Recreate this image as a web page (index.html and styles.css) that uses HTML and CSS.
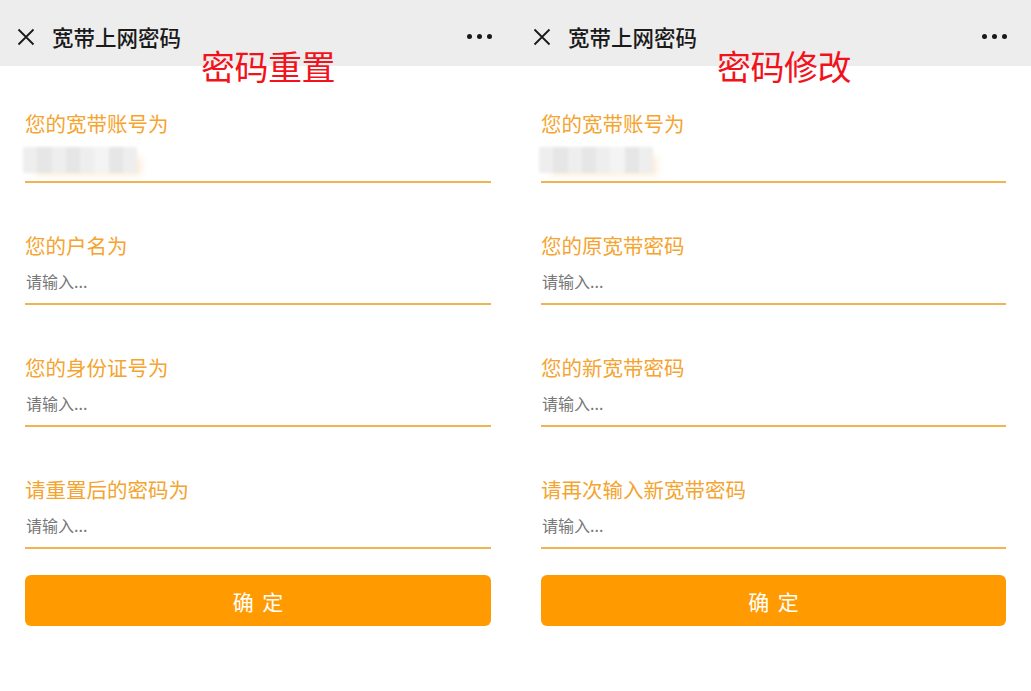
FILE: index.html
```html
<!DOCTYPE html>
<html lang="zh-CN">
<head>
<meta charset="utf-8">
<title>宽带上网密码</title>
<link rel="stylesheet" href="styles.css">
</head>
<body>
<div class="page">
  <section class="screen screen-a">
    <header class="bar">
      <svg class="close" viewBox="0 0 18 18" width="18" height="18"><path d="M1.5 1.5 L16.5 16.5 M16.5 1.5 L1.5 16.5" stroke="#1a1a1a" stroke-width="1.8" fill="none"/></svg>
      <span class="bar-title">宽带上网密码</span>
      <span class="dots"><i></i><i></i><i></i></span>
    </header>
    <div class="stamp">密码重置</div>
    <form class="form">
      <div class="field">
        <div class="label">您的宽带账号为</div>
        <div class="value"><div class="mosaic"><b></b><b class="d"></b><b></b><b class="d"></b><b></b><b class="l"></b><b class="d"></b><b></b></div></div>
      </div>
      <div class="field">
        <div class="label">您的户名为</div>
        <div class="value ph">请输入...</div>
      </div>
      <div class="field">
        <div class="label">您的身份证号为</div>
        <div class="value ph">请输入...</div>
      </div>
      <div class="field">
        <div class="label">请重置后的密码为</div>
        <div class="value ph">请输入...</div>
      </div>
      <div class="btn">确 定</div>
    </form>
  </section>
  <section class="screen screen-b">
    <header class="bar">
      <svg class="close" viewBox="0 0 18 18" width="18" height="18"><path d="M1.5 1.5 L16.5 16.5 M16.5 1.5 L1.5 16.5" stroke="#1a1a1a" stroke-width="1.8" fill="none"/></svg>
      <span class="bar-title">宽带上网密码</span>
      <span class="dots"><i></i><i></i><i></i></span>
    </header>
    <div class="stamp">密码修改</div>
    <form class="form">
      <div class="field">
        <div class="label">您的宽带账号为</div>
        <div class="value"><div class="mosaic"><b></b><b class="d"></b><b></b><b class="d"></b><b></b><b class="l"></b><b class="d"></b><b></b></div></div>
      </div>
      <div class="field">
        <div class="label">您的原宽带密码</div>
        <div class="value ph">请输入...</div>
      </div>
      <div class="field">
        <div class="label">您的新宽带密码</div>
        <div class="value ph">请输入...</div>
      </div>
      <div class="field">
        <div class="label">请再次输入新宽带密码</div>
        <div class="value ph">请输入...</div>
      </div>
      <div class="btn">确 定</div>
    </form>
  </section>
</div>
</body>
</html>
```

FILE: styles.css
```css
* { box-sizing: border-box; }
html, body { margin: 0; padding: 0; background: #ffffff; }
body {
  font-family: "Noto Sans CJK SC", "Noto Sans", sans-serif;
  width: 1031px;
  height: 691px;
  overflow: hidden;
}
.page { display: flex; }
.screen { position: relative; height: 691px; }
.screen-a { width: 516px; }
.screen-b { width: 515px; }

.bar {
  height: 66px;
  background: #ededed;
  display: flex;
  align-items: center;
  padding: 7px 24px 0 17px;
}
.close { flex: none; margin-right: 17px; }
.bar-title {
  font-size: 21.5px;
  color: #1a1a1a;
  font-weight: 500;
  flex: 1;
  line-height: 28px;
}
.dots { display: flex; gap: 5px; }
.dots i {
  width: 5px; height: 5px; border-radius: 50%;
  background: #1a1a1a; display: block;
}

.stamp {
  position: absolute;
  left: 201px;
  top: 46px;
  font-size: 34px;
  line-height: 40px;
  color: #f2121b;
  letter-spacing: -0.5px;
}

.form { padding: 45px 25px 0 25px; }
.field {
  border-bottom: 2px solid #f2b352;
  padding-bottom: 10px;
  margin-bottom: 50px;
}
.field:nth-child(4) { margin-bottom: 26px; }
.label {
  font-size: 20.5px;
  line-height: 24px;
  color: #f4a42f;
  margin-bottom: 12px;
}
.value { height: 24px; line-height: 24px; position: relative; }
.ph { font-size: 16px; color: #777777; padding-left: 1px; }
.mosaic {
  position: absolute;
  left: -2px; top: 0px;
  width: 114px; height: 26px;
  display: flex;
  filter: blur(1.5px);
  box-shadow: 8px 6px 6px -4px rgba(245, 190, 110, 0.3);
}
.mosaic b { flex: 1; background: #eeeeee; }
.mosaic b.d { background: #e6e6e6; }
.mosaic b.l { background: #f4f4f4; }

.btn {
  height: 51px;
  border-radius: 6px;
  background: #ff9b00;
  color: #ffffff;
  font-size: 21px;
  letter-spacing: 2px;
  display: flex;
  align-items: center;
  justify-content: center;
  padding-left: 2px;
}
```
